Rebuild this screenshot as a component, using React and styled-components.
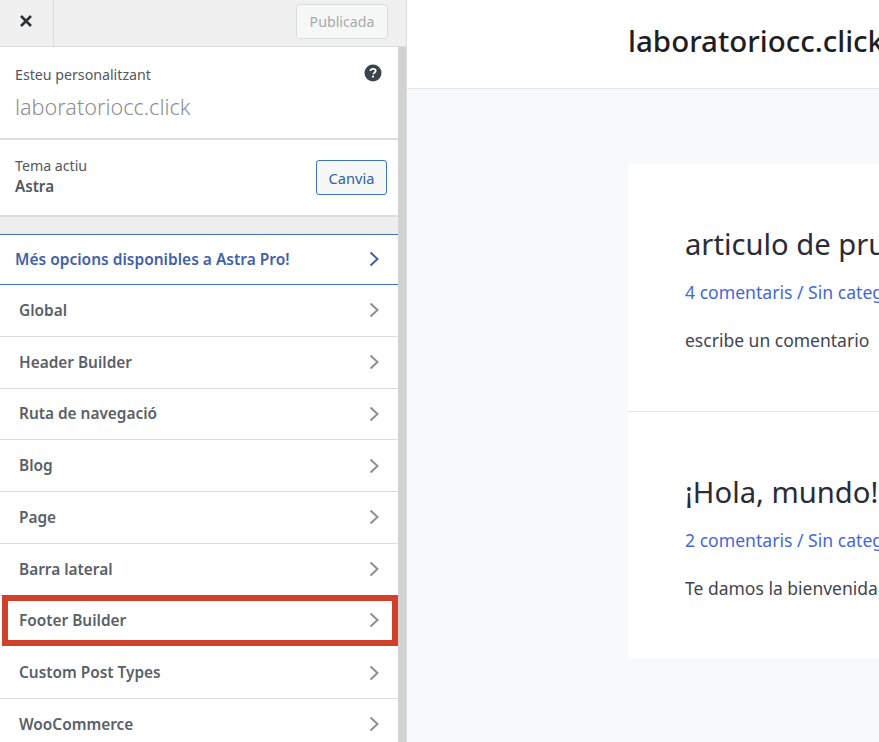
import React from "react";
import styled, { createGlobalStyle } from "styled-components";

const GlobalStyle = createGlobalStyle`
  html, body {
    margin: 0;
    padding: 0;
    height: 742px;
    overflow: hidden;
    background: #fff;
  }
  * {
    box-sizing: border-box;
  }
`;

const sections = [
  "Global",
  "Header Builder",
  "Ruta de navegació",
  "Blog",
  "Page",
  "Barra lateral",
  "Footer Builder",
  "Custom Post Types",
  "WooCommerce",
];

const Styled = {
  Page: styled.div`
    display: flex;
    width: 879px;
    height: 742px;
    overflow: hidden;
    font-family: "Noto Sans", "Open Sans", sans-serif;
  `,
  Sidebar: styled.aside`
    flex: 0 0 407px;
    display: flex;
    flex-direction: column;
    background: #eeeeee;
    border-right: 1px solid #dddddd;
    overflow: hidden;
  `,
  TopBar: styled.div`
    flex: 0 0 47px;
    display: flex;
    align-items: center;
    justify-content: space-between;
    padding-right: 18px;
    background: #f0f0f1;
    border-bottom: 1px solid #dcdcde;
  `,
  CloseButton: styled.div`
    width: 54px;
    height: 46px;
    display: flex;
    align-items: center;
    justify-content: center;
    border-right: 1px solid #dcdcde;
    color: #3c434a;
    padding: 0 1px 4px 0;
  `,
  PublishButton: styled.button`
    width: 92px;
    height: 35px;
    margin-bottom: 4px;
    padding: 0;
    font: 14.2px "Noto Sans", "Open Sans", sans-serif;
    color: #a7aaad;
    background: #f6f7f7;
    border: 1px solid #dcdcde;
    border-radius: 3px;
  `,
  ScrollArea: styled.div`
    flex: 1;
    display: flex;
    min-height: 0;
  `,
  Panel: styled.div`
    width: 398px;
    display: flex;
    flex-direction: column;
  `,
  ScrollTrack: styled.div`
    width: 8px;
    background: #d2d2d2;
  `,
  InfoBlock: styled.div`
    position: relative;
    flex: 0 0 93px;
    padding: 18px 16px 0 15px;
    background: #fff;
    border-bottom: 2px solid #dcdcde;
  `,
  InfoLabel: styled.div`
    font-size: 14.2px;
    line-height: 20px;
    color: #50575e;
  `,
  SiteName: styled.div`
    margin-top: 8px;
    font-size: 21.6px;
    font-weight: 300;
    line-height: 28px;
    color: #8c8f94;
  `,
  HelpIcon: styled.div`
    position: absolute;
    top: 17px;
    right: 16px;
    display: flex;
    color: #3c434a;
  `,
  ThemeBlock: styled.div`
    flex: 0 0 77px;
    display: flex;
    align-items: center;
    justify-content: space-between;
    padding: 0 11px 0 15px;
    background: #fff;
    border-bottom: 2px solid #dcdcde;
  `,
  ThemeInfo: styled.div`
    margin-bottom: 2px;
  `,
  ThemeName: styled.div`
    font-size: 15.2px;
    font-weight: 600;
    line-height: 21px;
    color: #50575e;
  `,
  ChangeButton: styled.button`
    width: 71px;
    height: 35px;
    padding: 0;
    font: 14.6px "Noto Sans", "Open Sans", sans-serif;
    color: #2f5f9e;
    background: #f6f7f7;
    border: 1px solid #3f73c0;
    border-radius: 3px;
  `,
  Spacer: styled.div`
    flex: 0 0 17px;
  `,
  ProBanner: styled.div`
    flex: 0 0 51px;
    display: flex;
    align-items: center;
    justify-content: space-between;
    padding: 0 19px 2px 15px;
    font-size: 15.5px;
    font-weight: 600;
    color: #3f62a8;
    background: #fff;
    border-top: 1px solid #3f73c0;
    border-bottom: 1px solid #3f73c0;
  `,
  Row: styled.div`
    position: relative;
    flex: 0 0 51.75px;
    display: flex;
    align-items: center;
    justify-content: space-between;
    padding: 0 19px ${(p) => (p.$marked ? "2px" : "0")} 19px;
    font-size: 15.4px;
    font-weight: 600;
    color: #5a6068;
    background: #fff;
    border-bottom: ${(p) => (p.$marked ? "none" : "1px solid #dcdcde")};

    ${(p) =>
      p.$marked &&
      `
      &::after {
        content: "";
        position: absolute;
        inset: -1px 0 1px 2px;
        border: 6px solid #d0402a;
      }
    `}
  `,
  Chevron: styled.svg`
    width: 10px;
    height: 16px;
    fill: none;
    stroke: ${(p) => p.$color};
    stroke-width: 2;
  `,
  Preview: styled.main`
    flex: 1;
    min-width: 0;
    display: flex;
    flex-direction: column;
    background: #f8f9fb;
    overflow: hidden;
  `,
  SiteHeader: styled.header`
    flex: 0 0 89px;
    padding: 22px 0 0 221px;
    background: #fff;
    border-bottom: 1px solid #e8e8ea;
    font-size: 29.5px;
    line-height: 38px;
    font-weight: 500;
    white-space: nowrap;
    color: #1e1e24;
  `,
  Card: styled.div`
    flex: none;
    width: 600px;
    margin: 75px 0 0 221px;
    background: #fff;
  `,
  Article: styled.article`
    height: ${(p) => p.$height}px;
    padding: ${(p) => p.$top}px 0 0 57px;
    border-bottom: ${(p) => (p.$divided ? "1px solid #e8e8ea" : "none")};
    white-space: nowrap;
  `,
  Title: styled.h2`
    margin: 0;
    font-size: 29.2px;
    font-weight: 400;
    line-height: 40px;
    color: #2a2b36;
  `,
  Meta: styled.div`
    margin-top: 16px;
    font-size: 17.6px;
    line-height: 24px;
    color: #4568d6;
  `,
  Excerpt: styled.p`
    margin: 24px 0 0;
    font-size: 17.5px;
    line-height: 24px;
    color: #3f4550;
  `,
};

function Chevron({ color = "#8c8f94" }) {
  return (
    <Styled.Chevron viewBox="0 0 10 16" $color={color}>
      <path d="M1.5 1.5l7 6.5-7 6.5" />
    </Styled.Chevron>
  );
}

export default function App() {
  return (
    <>
      <GlobalStyle />
      <Styled.Page>
        <Styled.Sidebar>
          <Styled.TopBar>
            <Styled.CloseButton>
              <svg width="14" height="14" viewBox="0 0 14 14">
                <path d="M2 2l10 10M12 2L2 12" stroke="#2c3338" strokeWidth="2.6" />
              </svg>
            </Styled.CloseButton>
            <Styled.PublishButton>Publicada</Styled.PublishButton>
          </Styled.TopBar>
          <Styled.ScrollArea>
            <Styled.Panel>
              <Styled.InfoBlock>
                <Styled.InfoLabel>Esteu personalitzant</Styled.InfoLabel>
                <Styled.SiteName>laboratoriocc.click</Styled.SiteName>
                <Styled.HelpIcon>
                  <svg width="18" height="18" viewBox="0 0 18 18">
                    <circle cx="9" cy="9" r="8.5" fill="currentColor" />
                    <path
                      d="M6.4 7c.1-1.5 1.2-2.2 2.7-2.2s2.6.8 2.6 2c0 1-.6 1.5-1.3 2-.6.4-.9.7-.9 1.5"
                      fill="none"
                      stroke="#fff"
                      strokeWidth="1.8"
                    />
                    <rect x="8" y="11.6" width="1.9" height="1.9" fill="#fff" />
                  </svg>
                </Styled.HelpIcon>
              </Styled.InfoBlock>
              <Styled.ThemeBlock>
                <Styled.ThemeInfo>
                  <Styled.InfoLabel>Tema actiu</Styled.InfoLabel>
                  <Styled.ThemeName>Astra</Styled.ThemeName>
                </Styled.ThemeInfo>
                <Styled.ChangeButton>Canvia</Styled.ChangeButton>
              </Styled.ThemeBlock>
              <Styled.Spacer />
              <Styled.ProBanner>
                Més opcions disponibles a Astra Pro!
                <Chevron color="#3f62a8" />
              </Styled.ProBanner>
              {sections.map((name) => (
                <Styled.Row key={name} $marked={name === "Footer Builder"}>
                  {name}
                  <Chevron />
                </Styled.Row>
              ))}
            </Styled.Panel>
            <Styled.ScrollTrack />
          </Styled.ScrollArea>
        </Styled.Sidebar>
        <Styled.Preview>
          <Styled.SiteHeader>laboratoriocc.click</Styled.SiteHeader>
          <Styled.Card>
            <Styled.Article $height={248} $top={60} $divided>
              <Styled.Title>articulo de prueba</Styled.Title>
              <Styled.Meta>4 comentaris / Sin categoría</Styled.Meta>
              <Styled.Excerpt>escribe un comentario</Styled.Excerpt>
            </Styled.Article>
            <Styled.Article $height={246} $top={60}>
              <Styled.Title>¡Hola, mundo!</Styled.Title>
              <Styled.Meta>2 comentaris / Sin categoría</Styled.Meta>
              <Styled.Excerpt>Te damos la bienvenida a WordPress.</Styled.Excerpt>
            </Styled.Article>
          </Styled.Card>
        </Styled.Preview>
      </Styled.Page>
    </>
  );
}
